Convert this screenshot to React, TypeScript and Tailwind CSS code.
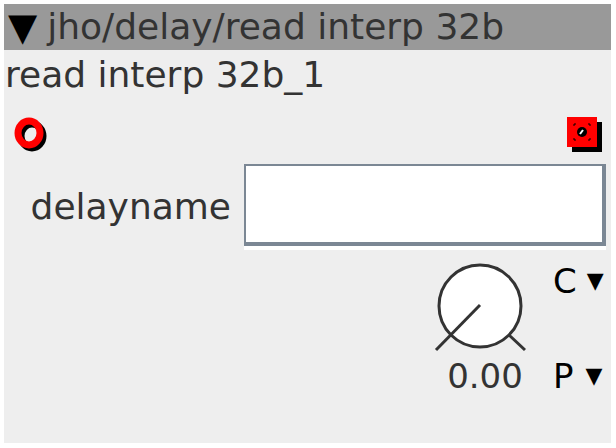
import React from 'react';

const font = { fontFamily: '"DejaVu Sans", "Liberation Sans", sans-serif' };

// Inlet: red ring with a black drop shadow
const Inlet = () => (
  <svg width="36" height="38" viewBox="0 0 36 38">
    <ellipse cx="18" cy="19" rx="11" ry="12" fill="none" stroke="#000" strokeWidth="7" />
    <ellipse cx="15" cy="16" rx="11" ry="12" fill="none" stroke="#ff0000" strokeWidth="7" />
  </svg>
);

// Outlet: red square with shadow and a dot in the middle
const Outlet = () => (
  <svg width="38" height="38" viewBox="0 0 38 38">
    <rect x="6" y="6" width="30" height="30" fill="#000" />
    <rect x="1" y="1" width="30" height="30" fill="#ff0000" />
    <circle cx="16" cy="16" r="5" fill="#000" />
    <path d="M14 18 L17 14" stroke="#fff" strokeWidth="2" />
    <path d="M8 10V8h2M22 8h2v2M8 22v2h2M24 22v2h-2" stroke="#000" strokeWidth="1" fill="none" />
  </svg>
);

const Knob = () => (
  <svg width="96" height="92" viewBox="0 0 96 92">
    <circle cx="48" cy="44" r="41" fill="#fff" stroke="#333" strokeWidth="3" />
    <line x1="48" y1="43" x2="4" y2="88" stroke="#333" strokeWidth="3" />
    <line x1="77" y1="73" x2="93" y2="88" stroke="#333" strokeWidth="3" />
  </svg>
);

export default function App() {
  return (
    <div className="w-[616px] h-[448px] bg-white p-[4px]" style={font}>
      <div className="w-[607px] h-[439px] bg-[#eeeeee] flex flex-col text-[#333]">
        {/* Title bar */}
        <div className="h-[46px] shrink-0 bg-[#999999] flex items-center px-[4px] text-[36px] leading-none text-[#333] whitespace-nowrap">
          <span className="text-black text-[38px] mr-[10px]">▼</span>
          <span>jho/delay/read interp 32b</span>
        </div>

        {/* Instance name */}
        <div className="h-[50px] shrink-0 flex items-center px-[1px] text-[36px] leading-none whitespace-nowrap">
          read interp 32b_1
        </div>

        {/* Inlet / outlet row */}
        <div className="h-[64px] shrink-0 flex items-start justify-between pl-[10px] pr-[7px] pt-[16px]">
          <div className="mt-[1px]">
            <Inlet />
          </div>
          <Outlet />
        </div>

        {/* Attribute row */}
        <div className="flex items-start">
          <div className="w-[240px] h-[82px] flex items-center justify-end pr-[13px] pt-[4px] text-[36px] leading-none">
            delayname
          </div>
          <div className="border-b-[4px] border-white">
            <div className="w-[362px] h-[82px] bg-white border-t-2 border-l-2 border-b-4 border-r-4 border-[#7b8794]" />
          </div>
        </div>

        {/* Knob + modifiers */}
        <div className="flex pl-[428px] mt-[12px]">
          <div className="w-[96px] flex flex-col items-center">
            <Knob />
            <div className="text-[34px] leading-none mt-[5px] ml-[10px]">0.00</div>
          </div>
          <div className="flex flex-col ml-[25px] mt-[2px] text-black">
            <div className="flex items-center text-[34px] leading-none">
              C<span className="text-[22px] ml-[10px]">▼</span>
            </div>
            <div className="flex items-center text-[34px] leading-none mt-[61px]">
              P<span className="text-[22px] ml-[12px]">▼</span>
            </div>
          </div>
        </div>
      </div>
    </div>
  );
}
